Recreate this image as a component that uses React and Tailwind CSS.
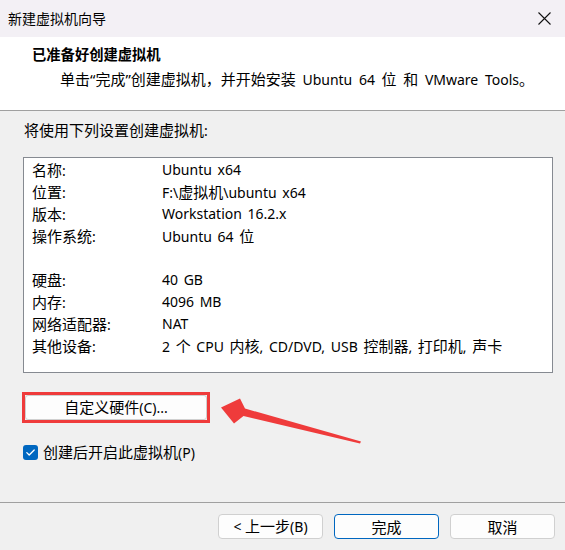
const CJK = /([\u3000-\u303f\u4e00-\u9fff\uff00-\uffef\u201c\u201d]+)/;

function T({ children, cjk = "text-[15px]" }) {
  const parts = String(children).split(CJK);
  return (
    <>
      {parts.map((p, i) =>
        i % 2 === 1 ? (
          <span key={i} className={cjk}>
            {p}
          </span>
        ) : (
          <span key={i}>{p}</span>
        )
      )}
    </>
  );
}

export default function App() {
  const rows = [
    ["名称:", "Ubuntu x64"],
    ["位置:", "F:\\虚拟机\\ubuntu x64"],
    ["版本:", "Workstation 16.2.x"],
    ["操作系统:", "Ubuntu 64 位"],
    ["", ""],
    ["硬盘:", "40 GB"],
    ["内存:", "4096 MB"],
    ["网络适配器:", "NAT"],
    ["其他设备:", "2 个 CPU 内核, CD/DVD, USB 控制器, 打印机, 声卡"],
  ];
  return (
    <div className="relative w-[565px] h-[550px] overflow-hidden bg-[#f0f0f0] flex flex-col text-black text-[14px] leading-[20px] font-['Noto_Sans','Noto_Sans_CJK_SC',sans-serif]">
      {/* title bar */}
      <div className="h-[37px] shrink-0 bg-[#f3f0f5] flex items-center justify-between pl-[8px] pr-[14px]">
        <span>新建虚拟机向导</span>
        <svg width="13" height="13" viewBox="0 0 13 13">
          <path d="M0.5 0.5L12.5 12.5M12.5 0.5L0.5 12.5" stroke="#111" strokeWidth="1.1" fill="none" />
        </svg>
      </div>
      {/* header */}
      <div className="h-[74px] shrink-0 bg-white border-b border-[#a0a0a0] pl-[32px] pt-[8px]">
        <div className="font-bold text-[14.3px] h-[20px]">已准备好创建虚拟机</div>
        <div className="pl-[28px] mt-[4px] h-[20px] whitespace-nowrap [word-spacing:3px]">
          <T>单击“完成”创建虚拟机，并开始安装</T>
          <span> Ubuntu 64 </span>
          <T>位</T>
          <span> </span>
          <T>和</T>
          <span> VMware Tools</span>
          <T>。</T>
        </div>
      </div>
      {/* body */}
      <div className="flex-1 flex flex-col pl-[23px] pt-[9px]">
        <div className="pl-[1px] h-[20px]">
          <T>将使用下列设置创建虚拟机</T>:
        </div>
        <div className="mt-[17px] w-[530px] h-[216px] bg-white border border-[#868a91] pt-[1px] pl-[8px]">
          {rows.map(([k, v], i) => (
            <div key={i} className="h-[22px] flex items-center whitespace-pre">
              <span className="w-[130px] shrink-0">
                <T>{k}</T>
              </span>
              <span className="[word-spacing:2px]">
                <T>{v}</T>
              </span>
            </div>
          ))}
        </div>
        <div className="mt-[19px] -ml-[1px] w-[188px] h-[31px] border-[3px] border-[#ef3b3b]">
          <div className="w-full h-full bg-[#fdfdfd] border border-[#d0d0d0] rounded-[3px] flex items-center justify-center">
            <span>
              <T>自定义硬件</T>(C)...
            </span>
          </div>
        </div>
        <div className="mt-[21px] h-[16px] flex items-center gap-[5px]">
          <svg width="15" height="15" viewBox="0 0 15 15" className="shrink-0">
            <rect x="0" y="0" width="15" height="15" rx="3" fill="#0067c0" />
            <path d="M3.8 7.6L6.2 10L11.2 5" stroke="#fff" strokeWidth="1.3" fill="none" strokeLinecap="round" strokeLinejoin="round" />
          </svg>
          <span>
            <T>创建后开启此虚拟机</T>(P)
          </span>
        </div>
      </div>
      {/* footer */}
      <div className="h-[48px] shrink-0 border-t border-[#a0a0a0] flex justify-end gap-[11px] pt-[11px] pr-[10px]">
        <div className="w-[105px] h-[25px] bg-[#fdfdfd] border border-[#d0d0d0] rounded-[4px] flex items-center justify-center">
          <span>
            &lt; <T>上一步</T>(B)
          </span>
        </div>
        <div className="w-[105px] h-[25px] bg-[#fdfdfd] border border-[#0067c0] rounded-[4px] flex items-center justify-center">
          <T>完成</T>
        </div>
        <div className="w-[105px] h-[25px] bg-[#fdfdfd] border border-[#d0d0d0] rounded-[4px] flex items-center justify-center">
          <T>取消</T>
        </div>
      </div>
      {/* annotation arrow */}
      <svg className="absolute left-0 top-0 pointer-events-none" width="565" height="550" viewBox="0 0 565 550">
        <polygon
          points="221,407.5 240,398.5 245,408.5 361,441.5 360,443.5 243.5,416 234,423.5"
          fill="#ef3b3b"
        />
      </svg>
    </div>
  );
}
